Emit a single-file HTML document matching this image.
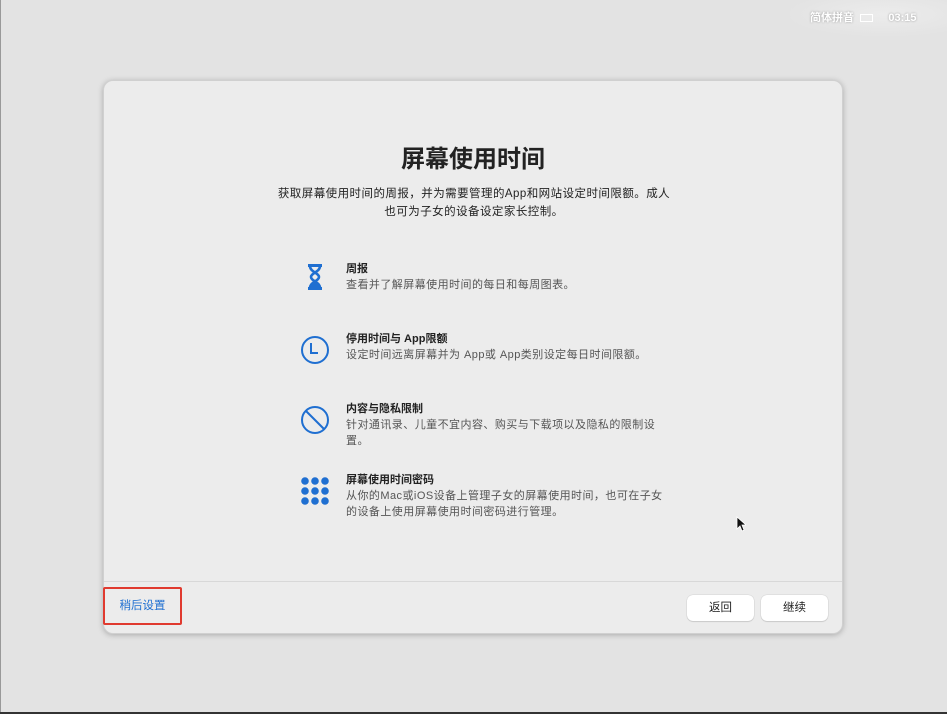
<!DOCTYPE html>
<html><head><meta charset="utf-8"><style>
*{margin:0;padding:0;box-sizing:border-box}
body{width:947px;height:714px;overflow:hidden;background:#e3e3e3;font-family:"Liberation Sans","Noto Sans CJK SC",sans-serif;position:relative}
.edge{position:absolute;left:0;bottom:0;width:947px;height:2px;background:#333}
.edgel{position:absolute;left:0;top:0;width:1px;height:714px;background:#999}
.glow{position:absolute;left:790px;top:0;width:157px;height:36px;background:radial-gradient(ellipse at 60% 40%,#ececec,#e3e3e3 75%)}
.menu{position:absolute;top:9px;left:810px;color:#fff;font-size:11px;font-weight:bold;text-shadow:0 0 2px #999}
.win{position:absolute;left:103px;top:80px;width:740px;height:554px;background:#ececec;border-radius:10px;box-shadow:0 1px 6px rgba(0,0,0,.25);border:1px solid #d0d0d0}
h1{position:absolute;top:58px;width:100%;text-align:center;font-size:24px;font-weight:bold;color:#222}
.sub{position:absolute;top:104px;left:160px;width:420px;text-align:center;font-size:11.5px;line-height:18px;color:#222;letter-spacing:.45px}
.item{position:absolute;left:242px;width:330px}
.item .t{font-size:11px;font-weight:bold;color:#222;line-height:15px}
.item .d{font-size:11px;color:#555;line-height:16px;letter-spacing:.45px}
.ic{position:absolute;left:-46px}
.sep{position:absolute;left:0;right:0;top:500px;height:1px;background:#d8d8d8}
.later{position:absolute;left:-1px;top:506px;width:79px;height:38px;border:2px solid #e03a2f;border-radius:2px;color:#1f6fd1;font-size:11.5px;text-align:center;line-height:34px}
.btn{position:absolute;top:514px;height:26px;background:#fff;border-radius:6px;box-shadow:0 0 1px rgba(0,0,0,.3),0 1px 1px rgba(0,0,0,.1);font-size:11.5px;color:#222;text-align:center;line-height:26px}
</style></head><body>
<div class="edgel"></div>
<div class="glow"></div>
<div class="menu">简体拼音 &nbsp;<span style="display:inline-block;width:13px;height:8px;border:1px solid #fff;vertical-align:middle"></span>&nbsp;&nbsp;&nbsp;&nbsp; 03:15</div>
<div class="win">
<h1>屏幕使用时间</h1>
<div class="sub">获取屏幕使用时间的周报，并为需要管理的App和网站设定时间限额。成人<br>也可为子女的设备设定家长控制。</div>
<div class="item" style="top:181px"><svg class="ic" width="30" height="30" viewBox="0 0 30 30" style="left:-46px;top:0"><path d="M8 3.5h14M8 26.5h14" stroke="#1f6fd1" stroke-width="3" fill="none"/><path d="M10 4c0 6 9 7 9 11s-9 5-9 11M20 4c0 6-9 7-9 11s9 5 9 11" stroke="#1f6fd1" stroke-width="2.6" fill="none"/><path d="M10 26c1-4 3-5 5-6 2 1 4 2 5 6z" fill="#1f6fd1"/></svg><div class="t">周报</div><div class="d">查看并了解屏幕使用时间的每日和每周图表。</div></div>
<div class="item" style="top:251px"><svg class="ic" width="30" height="30" viewBox="0 0 30 30" style="top:3px"><circle cx="15" cy="15" r="13" stroke="#1f6fd1" stroke-width="2" fill="none"/><path d="M11 8v10h7" stroke="#1f6fd1" stroke-width="2" fill="none"/></svg><div class="t">停用时间与 App限额</div><div class="d">设定时间远离屏幕并为 App或 App类别设定每日时间限额。</div></div>
<div class="item" style="top:321px"><svg class="ic" width="30" height="30" viewBox="0 0 30 30" style="top:3px"><circle cx="15" cy="15" r="13" stroke="#1f6fd1" stroke-width="2" fill="none"/><path d="M6 6l18 18" stroke="#1f6fd1" stroke-width="2"/></svg><div class="t">内容与隐私限制</div><div class="d">针对通讯录、儿童不宜内容、购买与下载项以及隐私的限制设<br>置。</div></div>
<div class="item" style="top:392px"><svg class="ic" width="30" height="30" viewBox="0 0 30 30" style="top:3px"><g fill="#1f6fd1"><circle cx="5" cy="5" r="3.8"/><circle cx="15" cy="5" r="3.8"/><circle cx="25" cy="5" r="3.8"/><circle cx="5" cy="15" r="3.8"/><circle cx="15" cy="15" r="3.8"/><circle cx="25" cy="15" r="3.8"/><circle cx="5" cy="25" r="3.8"/><circle cx="15" cy="25" r="3.8"/><circle cx="25" cy="25" r="3.8"/></g></svg><div class="t">屏幕使用时间密码</div><div class="d" style="width:360px">从你的Mac或iOS设备上管理子女的屏幕使用时间，也可在子女<br>的设备上使用屏幕使用时间密码进行管理。</div></div>
<div class="sep"></div>
<div class="later">稍后设置</div>
<div class="btn" style="left:583px;width:67px">返回</div>
<div class="btn" style="left:657px;width:67px">继续</div>
</div>
<svg style="position:absolute;left:736px;top:516px" width="10" height="16" viewBox="0 0 10 16"><path d="M1 1v12l3-3 2 5 2-1-2-5h4z" fill="#111" stroke="#fff" stroke-width=".8"/></svg>
<div class="edge"></div>
</body></html>
